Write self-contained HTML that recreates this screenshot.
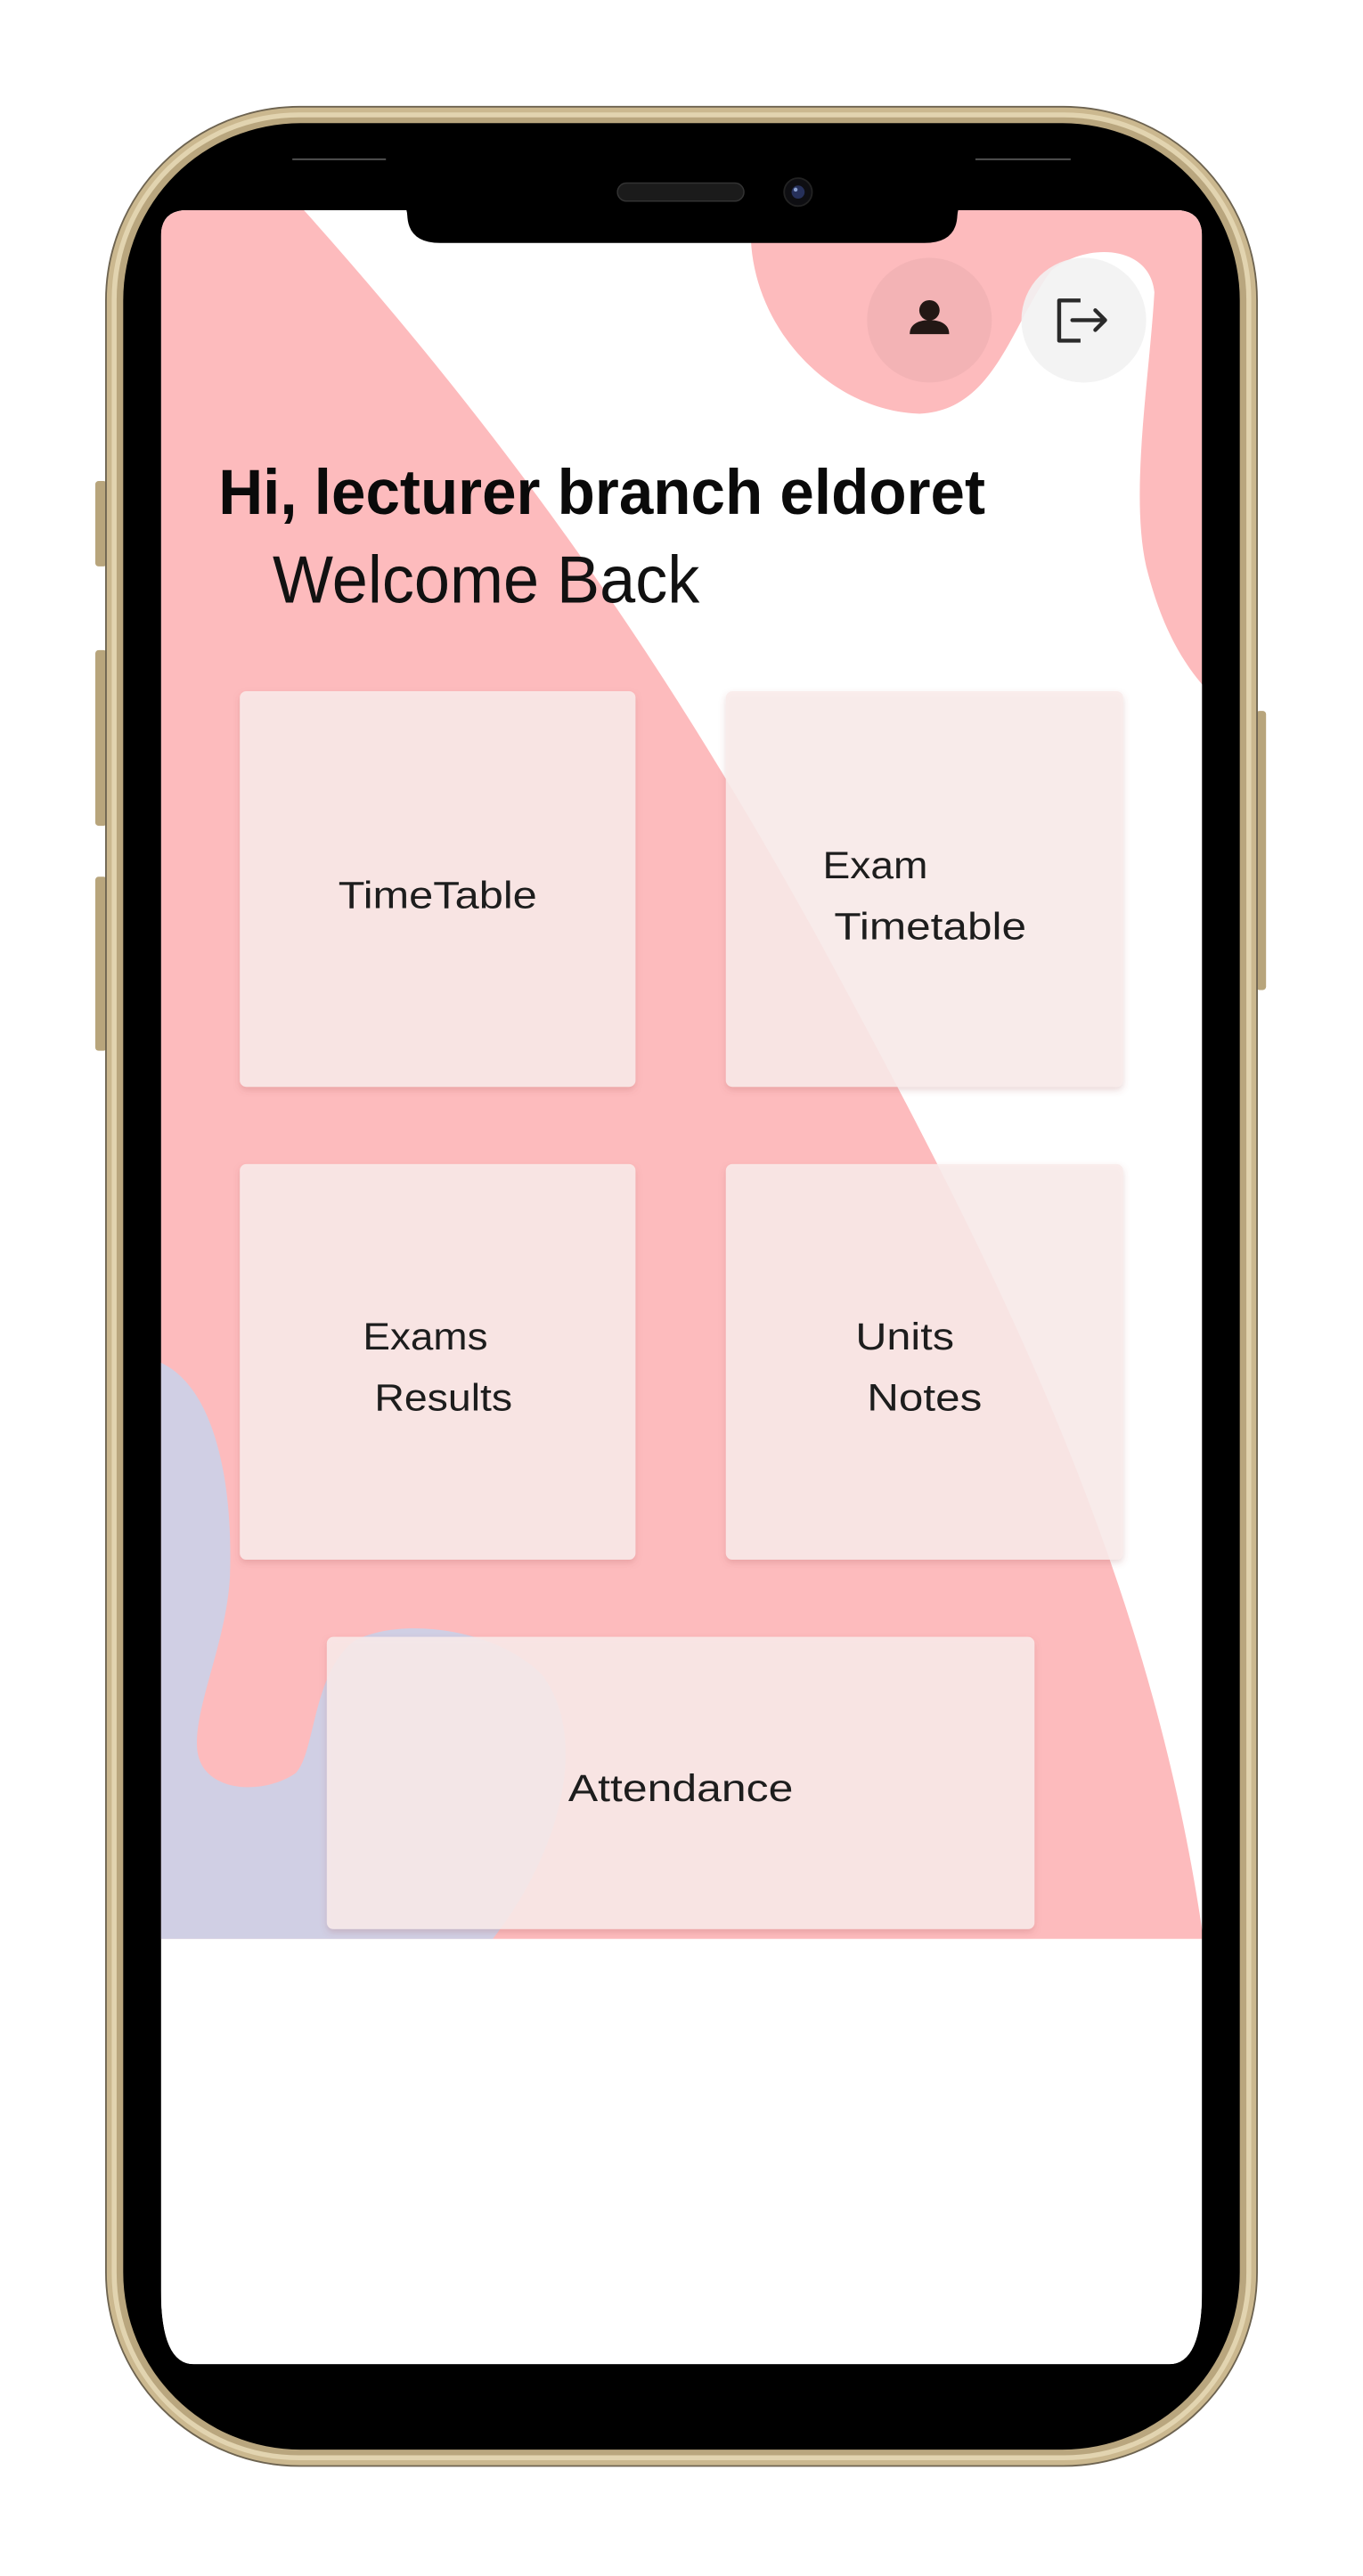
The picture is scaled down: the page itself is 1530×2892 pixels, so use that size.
<!DOCTYPE html>
<html><head><meta charset="utf-8"><style>
html,body{margin:0;padding:0;background:#fff;width:1530px;height:2892px;overflow:hidden}
svg{display:block}
text{font-family:"Liberation Sans",sans-serif}
</style></head><body>
<svg width="1530" height="2892" viewBox="0 0 830 1569" xmlns="http://www.w3.org/2000/svg">
<defs>
<clipPath id="scr"><path d="M114,128 H716 Q732,128 732,144 V1395 Q732,1440 712,1440 H118 Q98,1440 98,1395 V144 Q98,128 114,128 Z"/></clipPath>
<filter id="sh" x="-10%" y="-10%" width="120%" height="125%"><feDropShadow dx="0" dy="2" stdDeviation="2" flood-color="#a05050" flood-opacity="0.25"/></filter>
</defs>
<!-- side buttons -->
<rect x="58" y="293" width="7" height="52" rx="2" fill="#b8a57c"/>
<rect x="58" y="396" width="7" height="107" rx="2" fill="#b8a57c"/>
<rect x="58" y="534" width="7" height="106" rx="2" fill="#b8a57c"/>
<rect x="765" y="433" width="6" height="170" rx="2" fill="#b8a57c"/>
<!-- phone body -->
<rect x="64.5" y="65" width="701" height="1437" rx="118" fill="#cbb88f" stroke="#6d6350" stroke-width="1"/>
<rect x="68" y="68.5" width="694" height="1430" rx="114" fill="#e2d4b0"/>
<rect x="71" y="71.5" width="688" height="1424" rx="111" fill="#b9a67e"/>
<rect x="75" y="75" width="680" height="1417" rx="108" fill="#000"/>
<line x1="178" y1="97" x2="235" y2="97" stroke="#555" stroke-width="1"/>
<line x1="594" y1="97" x2="652" y2="97" stroke="#555" stroke-width="1"/>
<!-- screen -->
<g clip-path="url(#scr)">
<rect x="98" y="128" width="634" height="1312" fill="#fff"/>
<rect x="98" y="128" width="634" height="1053" fill="#fdbbbd"/>
<path d="M185,128 H458 C450,190 500,250 560,252 C605,250 615,200 640,165 C660,148 700,148 703,178 C700,230 688,300 698,345 C708,385 722,405 733,418 V1182 C700,950 600,760 500,575 C420,430 330,290 185,128 Z" fill="#fff"/>
<path d="M98,830 C130,845 142,900 140,960 C138,1000 118,1040 120,1065 C122,1092 160,1094 180,1080 C192,1068 190,1020 215,1000 C240,985 300,990 330,1020 C360,1060 340,1130 300,1181 L98,1181 Z" fill="#d0cfe4"/>
<rect x="98" y="1181" width="634" height="260" fill="#fff"/>
<!-- icon buttons -->
<circle cx="566" cy="195" r="38" fill="#000" fill-opacity="0.04"/>
<circle cx="660" cy="195" r="38" fill="#f2f2f2" fill-opacity="0.9"/>
<circle cx="566" cy="189" r="6.2" fill="#231815"/>
<path d="M554,203.5 C554,197 560,195 566,195 C572,195 578,197 578,203.5 Z" fill="#231815"/>
<path d="M658,183 H645 V207.5 H658" fill="none" stroke="#2a2a2a" stroke-width="2.4" stroke-linejoin="round"/>
<path d="M653,195 H673 M667,189 L673,195 L667,201" fill="none" stroke="#2a2a2a" stroke-width="2.4" stroke-linejoin="round" stroke-linecap="round"/>
<!-- headings -->
<text x="133" y="313" font-size="39" font-weight="bold" fill="#0a0a0a" textLength="467" lengthAdjust="spacingAndGlyphs">Hi, lecturer branch eldoret</text>
<text x="166" y="367" font-size="41" fill="#111" textLength="260" lengthAdjust="spacingAndGlyphs">Welcome Back</text>
<!-- cards -->
<g fill="rgb(249,236,234)" fill-opacity="0.87" filter="url(#sh)">
<rect x="146" y="421" width="241" height="241" rx="4"/>
<rect x="442" y="421" width="242" height="241" rx="4"/>
<rect x="146" y="709" width="241" height="241" rx="4"/>
<rect x="442" y="709" width="242" height="241" rx="4"/>
<rect x="199" y="997" width="431" height="178" rx="4"/>
</g>
<g font-size="23" fill="#1d1d1d">
<text x="206" y="553" textLength="121" lengthAdjust="spacingAndGlyphs">TimeTable</text>
<text x="501" y="535" textLength="64" lengthAdjust="spacingAndGlyphs">Exam</text>
<text x="508" y="572" textLength="117" lengthAdjust="spacingAndGlyphs">Timetable</text>
<text x="221" y="822" textLength="76" lengthAdjust="spacingAndGlyphs">Exams</text>
<text x="228" y="859" textLength="84" lengthAdjust="spacingAndGlyphs">Results</text>
<text x="521" y="822" textLength="60" lengthAdjust="spacingAndGlyphs">Units</text>
<text x="528" y="859" textLength="70" lengthAdjust="spacingAndGlyphs">Notes</text>
<text x="346" y="1097" textLength="137" lengthAdjust="spacingAndGlyphs">Attendance</text>
</g>
</g>
<!-- notch -->
<path d="M238,120 H593 Q583,122 583,132 V130 Q583,148 563,148 H268 Q248,148 248,130 V132 Q248,122 238,120 Z" fill="#000"/>
<rect x="248" y="110" width="335" height="20" fill="#000"/>
<rect x="376" y="111.5" width="77" height="11" rx="5.5" fill="#1b1b1b" stroke="#333" stroke-width="0.8"/>
<circle cx="486" cy="117" r="8.5" fill="#0e0e12" stroke="#222" stroke-width="1"/>
<circle cx="486" cy="117" r="4" fill="#26305a"/>
<circle cx="484.5" cy="115.5" r="1.2" fill="#8aa0d0"/>
</svg>
</body></html>
